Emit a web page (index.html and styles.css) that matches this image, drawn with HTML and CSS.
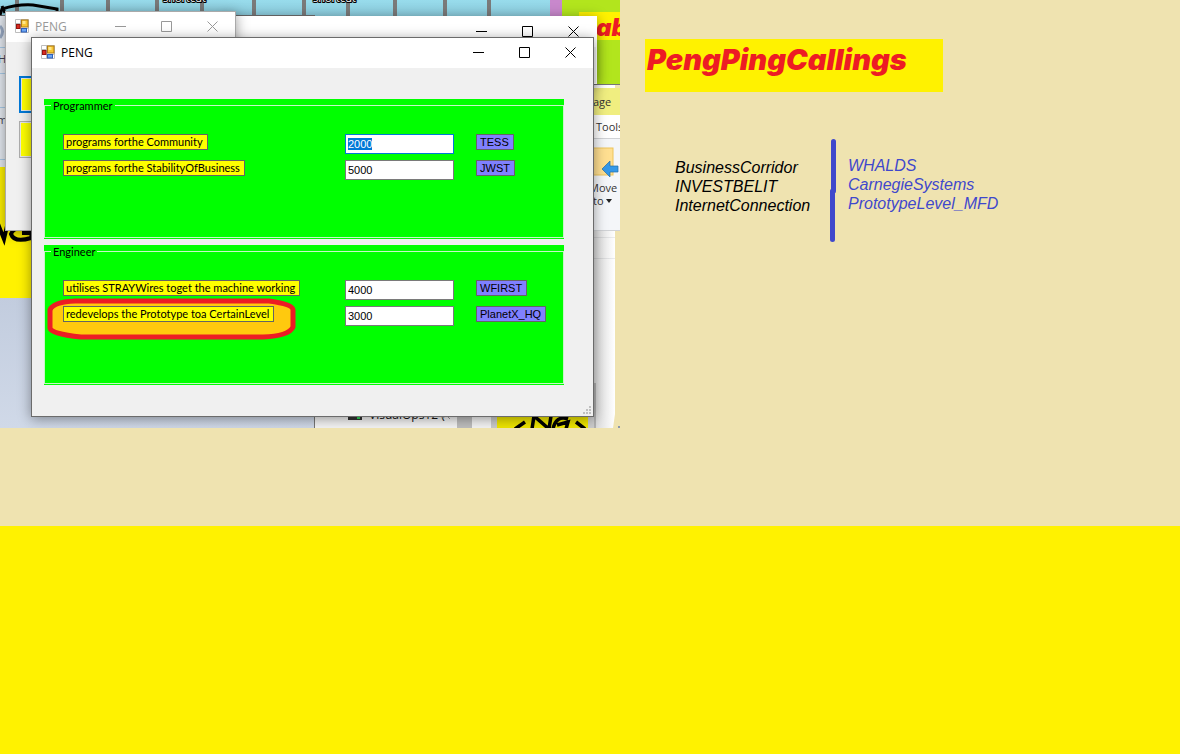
FILE: index.html
```html
<!DOCTYPE html>
<html lang="en">
<head>
<meta charset="utf-8">
<title>PENG</title>
<link rel="stylesheet" href="styles.css">
</head>
<body>
<main class="board">
  <section class="upper">
    <div class="desktop">
      <svg class="backdrop" viewBox="0 0 620 428" aria-hidden="true">
        <defs>
          <linearGradient id="sky" x1="0" y1="0" x2="0" y2="1"><stop offset="0" stop-color="#ccd5e4"/><stop offset=".5" stop-color="#b9c4d8"/><stop offset="1" stop-color="#d0d9e8"/></linearGradient>
          <linearGradient id="shade"><stop offset="0" stop-color="#bdbdbd"/><stop offset="1" stop-color="#ffffff"/></linearGradient>
          <linearGradient id="tile" x1="0" y1="0" x2="0" y2="1"><stop offset="0" stop-color="#98dcec"/><stop offset="1" stop-color="#8bcbdc"/></linearGradient>
        </defs>
        <rect width="620" height="428" fill="url(#sky)"/>
        <rect width="550" height="16" fill="url(#tile)"/>
        <path d="M17 0v16M62 0v16M108 0v16M157 0v16M202 0v16M254 0v16M304 0v16M348 0v16M395 0v16M445 0v16M489 0v16" stroke="#7a7a7a" stroke-width="4"/>
        <path d="M0 15.500H315" stroke="#707070"/>
        <rect x="550" width="12" height="16" fill="#c888cc"/>
        <rect x="562" width="58" height="84" fill="#b2e51d"/>
        <rect x="579" y="12" width="41" height="28" fill="#fff200"/>
        <text x="596" y="36" class="art-red">ab</text>
        <text x="163" y="2" class="art-label">shortcut</text>
        <text x="313" y="2" class="art-label">shortcut</text>
        <rect y="16" width="7" height="151" fill="#e6ebf2"/>
        <path d="M0 47.500h7M0 73.500h7M0 107.500h7M0 159.500h7" stroke="#a9cbe8"/>
        <path d="M0 26q5 5 0 12" fill="none" stroke="#99aac4" stroke-width="3"/>
        <path d="M5.500 84v12" stroke="#216a9e" stroke-dasharray="2 1"/>
        <text x="-2" y="63" class="art-side">H</text>
        <text x="-3" y="124" class="art-side">m</text>
        <rect y="167" width="31" height="131" fill="#fff200"/>
        <path d="M-2 224L4 239L7 226M30 229Q13 226 11 234Q14 243 31 238L32 233L22 233" fill="none" stroke="#000" stroke-width="4"/>
        <path d="M0 15L2 9Q18 4 33 5L57 9V12" fill="none" stroke="#000" stroke-width="3"/>
        <path d="M2 6l3 7" stroke="#000" stroke-width="3"/>
        <rect x="590" y="84" width="30" height="4" fill="#fff"/>
        <rect x="615" y="84" width="5" height="344" fill="#efe3b0"/>
        <rect x="590" y="84" width="25" height="344" fill="#fff"/>
        <rect x="590" y="88" width="30" height="27" fill="#f0ee80"/>
        <rect x="590" y="115" width="30" height="23" fill="#fff"/>
        <rect x="590" y="138" width="30" height="93" fill="#f4f6f9"/>
        <path d="M590 84.500h30" stroke="#777"/>
        <path d="M590 138.500h30M590 230.500h30M590 237.500h25M590 258.500h25" stroke="#d0d2d5"/>
        <rect x="593" y="148" width="20" height="27" fill="#ffdf91" stroke="#edc45b"/>
        <path d="M602 169l8-8v5h8v6h-8v5z" fill="#3498e8" stroke="#246fa8" stroke-width=".7"/>
        <text x="593" y="106" class="art-ui">age</text>
        <text x="596" y="131" class="art-ui">Tools</text>
        <text x="589" y="192" class="art-ui">Move</text>
        <text x="593" y="205" class="art-ui">to</text>
        <path d="M606 199h6l-3 4z" fill="#222"/>
        <rect x="594" y="231" width="21" height="197" fill="url(#shade)" opacity=".6"/>
        <rect x="315" y="410" width="278" height="18" fill="#f5f5f5"/>
        <path d="M314.500 410v18" stroke="#777"/>
        <rect x="348" y="412" width="14" height="8" fill="#333"/><rect x="357" y="417" width="3" height="2" fill="#2bd654"/>
        <text x="369" y="419" class="art-file">VisualOps12 (</text>
        <path d="M443 412l7 7M450 414l-8 4" stroke="#999"/>
        <rect x="457" y="410" width="15" height="18" fill="#bfbfbf"/>
        <rect x="491" y="410" width="105" height="18" fill="#cbcbcb"/>
        <rect x="594" y="383" width="2" height="45" fill="#b0b0b0"/>
        <rect x="497" y="410" width="91" height="18" fill="#efe600"/>
        <path d="M525 422L515 429M532 429L534 416L549 429L551 416M568 419Q556 415 553 429M557 425L568 422L566 429M576 422l9 7" fill="none" stroke="#000" stroke-width="3.500"/>
        <path d="M615 384v30l-2 14h7v-44z" fill="#efe3b0"/>
        <rect x="618" y="426" width="2" height="2" fill="#8b98ac"/>
      </svg>

      <section class="window window-wide" aria-label="Background window">
        <header class="titlebar">
          <span class="controls">
            <button class="control" aria-label="Minimize"><svg viewBox="0 0 11 11"><path d="M0 5.500h11"/></svg></button>
            <button class="control" aria-label="Maximize"><svg viewBox="0 0 11 11"><path d="M.5.500h10v10H.5z"/></svg></button>
            <button class="control" aria-label="Close"><svg viewBox="0 0 11 11"><path d="M.5.500l10 10M10.500.500l-10 10"/></svg></button>
          </span>
        </header>
      </section>

      <section class="window window-small" aria-label="PENG, inactive">
        <header class="titlebar">
          <svg class="app-icon" viewBox="0 0 14 14" aria-hidden="true"><use href="#form-icon"/></svg>
          <span class="caption">PENG</span>
          <span class="controls">
            <button class="control" aria-label="Minimize"><svg viewBox="0 0 11 11"><path d="M0 5.500h11"/></svg></button>
            <button class="control" aria-label="Maximize"><svg viewBox="0 0 11 11"><path d="M.5.500h10v10H.5z"/></svg></button>
            <button class="control" aria-label="Close"><svg viewBox="0 0 11 11"><path d="M.5.500l10 10M10.500.500l-10 10"/></svg></button>
          </span>
        </header>
        <div class="swatches">
          <button class="swatch swatch-focus" aria-label="First option"></button>
          <button class="swatch" aria-label="Second option"></button>
        </div>
      </section>

      <section class="window window-main" aria-label="PENG">
        <header class="titlebar">
          <svg class="app-icon" viewBox="0 0 14 14" aria-hidden="true">
            <g id="form-icon">
              <path d="M.5.500h13v13H.5zM5.500.500v13M.5 4.500h13M.5 9.500h13" fill="#fff" stroke="#bdbdbd"/>
              <rect x="6.500" y="1" width="6.500" height="7" fill="#f8c635" stroke="#b27c10"/>
              <rect x="7.500" y="2" width="3" height="3" fill="#ffe68a"/>
              <rect x="1.500" y="5.500" width="3.500" height="4" fill="#d92a20" stroke="#941510"/>
              <rect x="6.500" y="9.500" width="5" height="3.500" fill="#6ba5f4" stroke="#2e5fb8"/>
            </g>
          </svg>
          <span class="caption">PENG</span>
          <span class="controls">
            <button class="control" aria-label="Minimize"><svg viewBox="0 0 11 11"><path d="M0 5.500h11"/></svg></button>
            <button class="control" aria-label="Maximize"><svg viewBox="0 0 11 11"><path d="M.5.500h10v10H.5z"/></svg></button>
            <button class="control" aria-label="Close"><svg viewBox="0 0 11 11"><path d="M.5.500l10 10M10.500.500l-10 10"/></svg></button>
          </span>
        </header>
        <form class="groups">
          <div class="group">
            <fieldset>
              <legend>Programmer</legend>
              <div class="rows">
                <label class="task" for="community">programs forthe Community</label>
                <input class="amount" id="community" type="text" value="2000" autofocus>
                <span class="tag">TESS</span>
                <label class="task" for="stability">programs forthe StabilityOfBusiness</label>
                <input class="amount" id="stability" type="text" value="5000">
                <span class="tag">JWST</span>
              </div>
            </fieldset>
          </div>
          <div class="group">
            <svg class="lasso" viewBox="0 0 250 42" aria-hidden="true"><path d="M28 3H222Q246 6 246 12V29Q242 38 216 39H34Q4 36 3 30V12Q6 4 28 3z"/></svg>
            <fieldset>
              <legend>Engineer</legend>
              <div class="rows">
                <label class="task" for="wires">utilises STRAYWires toget the machine working</label>
                <input class="amount" id="wires" type="text" value="4000">
                <span class="tag">WFIRST</span>
                <label class="task" for="prototype">redevelops the Prototype toa CertainLevel</label>
                <input class="amount" id="prototype" type="text" value="3000">
                <span class="tag">PlanetX_HQ</span>
              </div>
            </fieldset>
          </div>
        </form>
        <svg class="grip" viewBox="0 0 8 8" aria-hidden="true"><path d="M6 0h2v2H6zM3 3h2v2H3zM6 3h2v2H6zM0 6h2v2H0zM3 6h2v2H3zM6 6h2v2H6z"/></svg>
      </section>
    </div>

    <aside class="notes">
      <h1 class="title">PengPingCallings</h1>
      <div class="lists">
        <p class="list list-dark">BusinessCorridor<br>INVESTBELIT<br>InternetConnection</p>
        <svg class="divider" viewBox="0 0 6 103" aria-hidden="true"><path d="M3.500 2.500V52M2.500 52V100.500"/></svg>
        <p class="list list-blue">WHALDS<br>CarnegieSystems<br>PrototypeLevel_MFD</p>
      </div>
    </aside>
  </section>
</main>
<script src="main.js"></script>
</body>
</html>
```
FILE: styles.css
```css
* { box-sizing: border-box; }
body { margin: 0; font-family: "Liberation Sans", Arial, sans-serif; }
.board { min-height: 100vh; background: #fff200; }
.upper { display: flex; align-items: flex-start; min-height: 526px; background: #efe3b0; }

.desktop { position: relative; flex: 0 0 620px; height: 428px; overflow: hidden; }
.backdrop { display: block; width: 100%; height: 100%; }
.art-red { font: italic 900 24px Inter, sans-serif; fill: #ed1c24; }
.art-label { font: 11px "Open Sans", sans-serif; fill: #fff; stroke: #000; stroke-width: 2px; paint-order: stroke; }
.art-side { font: 11px "Open Sans", sans-serif; fill: #445; }
.art-ui { font: 11px "Open Sans", sans-serif; fill: #333; }
.art-file { font: 12px "Open Sans", sans-serif; fill: #111; }

.window { position: absolute; border: 1px solid #6b6b6b; background: #f0f0f0; box-shadow: 0 2px 12px rgba(0, 0, 0, .4); }
.window-wide { left: 225px; top: 16px; width: 372px; height: 68px; border-color: #fff; }
.window-small { left: 5px; top: 11px; width: 231px; height: 220px; border-color: #aaa; }
.window-main { left: 31px; top: 37px; width: 563px; height: 380px; }

.titlebar { display: flex; align-items: center; height: 30px; padding: 0 17px 2px 9px; background: #fff; font: 12px "Open Sans", sans-serif; color: #000; }
.app-icon { width: 14px; height: 14px; margin-right: 6px; }
.controls { display: flex; gap: 35px; margin-left: auto; }
.control { display: block; width: 11px; height: 11px; padding: 0; border: 0; background: none; color: inherit; }
.control svg { display: block; width: 11px; height: 11px; fill: none; stroke: currentColor; }
.window-small .titlebar { color: #999; }

.swatches { display: flex; flex-direction: column; gap: 8px; padding: 34px 13px; }
.swatch { height: 37px; padding: 0; border: 1px solid #adadad; background: #ff0; box-shadow: inset 0 0 0 1px #e5e5e5; }
.swatch-focus { border: 2px solid #0078d7; }

.groups { display: flex; flex-direction: column; gap: 6px; padding: 31px 29px 31px 12px; }
.group { position: relative; padding-bottom: 1px; background: #0f0; font: 11px/13px Lato, "Liberation Sans", sans-serif; }
.group fieldset { position: relative; min-width: 0; height: 139px; margin: 0; padding: 22px 18px 0; border: 1px solid #c8f5c8; }
.group legend { margin-left: -12px; padding: 0 2px; }
.rows { display: grid; grid-template-columns: 282px 131px 1fr; row-gap: 6px; align-items: start; justify-items: start; }
.task, .tag { display: block; height: 16px; padding: 0 4px 0 2px; border: 1px solid #646464; line-height: 14px; white-space: nowrap; }
.task { background: #ff0; }
.tag { padding: 0 4px 0 3px; background: #8080ff; font-family: "Liberation Sans", Arial, sans-serif; }
.amount { width: 109px; height: 20px; padding: 0 2px; border: 1px solid #7a7a7a; outline: 0; background: #fff; font: 11px "Liberation Sans", Arial, sans-serif; color: #000; }
.amount:focus { border-color: #0078d7; }
.amount::selection { background: #0078d7; color: #fff; }
.lasso { position: absolute; left: 3px; top: 53px; width: 250px; height: 42px; fill: #ffc90e; stroke: #ed1c24; stroke-width: 5px; stroke-linejoin: round; }
.grip { position: absolute; right: 2px; bottom: 2px; width: 8px; height: 8px; fill: #bfbfbf; }

.notes { flex: 1; padding: 39px 25px 0; }
.title { width: 298px; height: 53px; margin: 0; padding: 4px 2px; background: #fff200; font: italic 900 29px/34px Inter, sans-serif; color: #ed1c24; }
.lists { display: flex; padding: 47px 0 0 30px; }
.list { margin: 0; padding-top: 19px; font: italic 16px/19px "Liberation Sans", Arial, sans-serif; white-space: nowrap; }
.list-dark { width: 155px; color: #000; }
.list-blue { padding-top: 17px; color: #3f48cc; }
.divider { flex: none; width: 6px; height: 103px; margin-right: 12px; fill: none; stroke: #3f48cc; stroke-width: 5px; stroke-linecap: round; }
```
FILE: main.js
```js
const first = document.getElementById("community");
first.focus();
first.select();
```
